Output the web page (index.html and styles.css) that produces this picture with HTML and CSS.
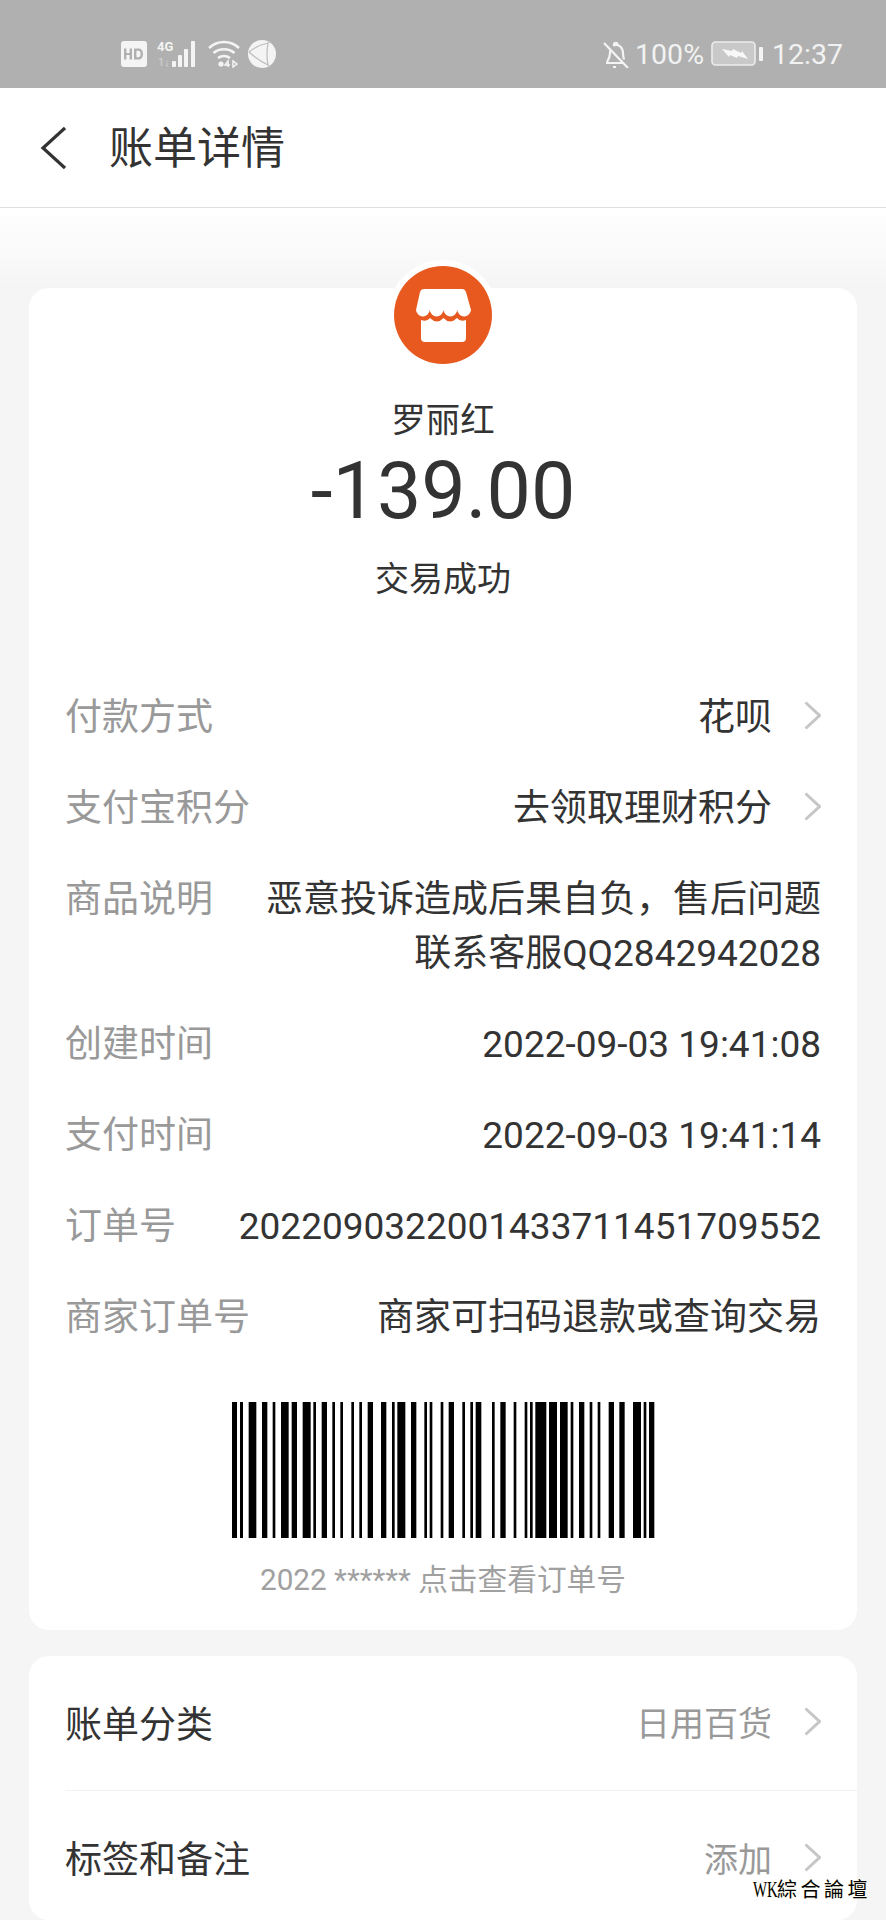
FILE: index.html
```html
<!DOCTYPE html>
<html>
<head>
  <title>账单详情</title>
  <link rel="stylesheet" href="styles.css">
</head>
<body>
  <div class="status-bar">
    <div class="status-left">
      <svg class="icon-hd" width="26" height="26" viewBox="0 0 26 26"><path fill="#f4f4f4" fill-rule="evenodd" d="M3 0h20a3 3 0 0 1 3 3v20a3 3 0 0 1-3 3H3a3 3 0 0 1-3-3V3a3 3 0 0 1 3-3zM3 7.500v11h2.400v-4.400h3.200v4.400H11v-11H8.600v4.400H5.400V7.500zM13 7.500v11h4.500c2.800 0 4.500-2 4.500-5.500s-1.700-5.500-4.500-5.500zm2.400 2.200h1.900c1.500 0 2.300 1.100 2.300 3.300s-.8 3.300-2.300 3.300h-1.900z"/></svg>
      <svg class="icon-signal" width="39" height="28" viewBox="0 0 39 28">
        <text x="0" y="11" class="net-label">4G</text>
        <text x="1" y="26" class="net-sub">1↓</text>
        <rect x="15" y="21" width="4" height="6" rx="1" fill="#f4f4f4"/>
        <rect x="21" y="15" width="4" height="12" rx="1" fill="#f4f4f4"/>
        <rect x="27" y="9" width="4" height="18" rx="1" fill="#f4f4f4"/>
        <rect x="34" y="1" width="4" height="26" rx="1" fill="#f4f4f4"/>
      </svg>
      <svg class="icon-wifi" width="32" height="28" viewBox="0 0 32 28" fill="none" stroke="#f4f4f4" stroke-width="2.600">
        <path d="M1 8c8.500-8 21.500-8 30 0"/>
        <path d="M5.500 13c6-5 15-5 21 0"/>
        <path d="M10 18c3.500-2.500 8.500-2.500 12 0"/>
        <circle cx="13" cy="24" r="2.600" fill="#f4f4f4" stroke="none"/>
        <path d="M20 27v-6l-3 4h5M25 27v-6l4 3z" stroke-width="1.500"/>
      </svg>
      <svg class="icon-globe" width="28" height="28" viewBox="0 0 28 28">
        <circle cx="14" cy="14" r="14" fill="#f4f4f4"/>
        <path d="M1 12Q10 5 20 3M1 12Q10 20 20 25M20 3Q18 14 20 25M20 3l3-2M20 25l2 2" fill="none" stroke="#bcbcbc" stroke-width="1.200"/>
      </svg>
    </div>
    <div class="status-right">
      <svg class="icon-bell" width="26" height="28" viewBox="0 0 26 28" fill="none" stroke="#f4f4f4" stroke-width="2.200">
        <path d="M3 23h17M4 22c2-3 3-5 3-9 0-1 .2-2 .6-3M10 5.500c6-2 10 2 10 8 0 2 .4 4 1 6"/>
        <path d="M11 5c0-3 3.500-3 3.500 0M1 3l24 25M10 27h3"/>
      </svg>
      <span class="status-text">100%</span>
      <svg class="icon-battery" width="52" height="26" viewBox="0 0 52 26">
        <rect x="1" y="1" width="43" height="23" rx="3.500" fill="#c9c9c9" stroke="#ececec" stroke-width="1.600"/>
        <path d="M11 8l10 2 1-2 8 4 1-2 6 8-10-3-1 2-7-3-1 2z" fill="#f8f8f8"/>
        <rect x="48" y="6" width="4" height="14" rx="1" fill="#f4f4f4"/>
      </svg>
      <span class="status-text time">12:37</span>
    </div>
  </div>

  <div class="nav-bar">
    <svg class="back-icon" width="26" height="44" viewBox="0 0 26 44" fill="none" stroke="#333" stroke-width="3.200"><path d="M25 2L3 22l22 20"/></svg>
    <h1>账单详情</h1>
  </div>

  <div class="content">
    <div class="card detail-card">
      <div class="summary">
        <div class="avatar">
          <svg width="98" height="98" viewBox="0 0 98 98">
            <circle cx="49" cy="49" r="49" fill="#e8591f"/>
            <path fill="#fff" d="M30 23H68Q71 23 72 26L77 44A6.900 7 0 0 1 63.250 44A6.900 7 0 0 1 49.500 44A6.900 7 0 0 1 35.750 44A6.900 7 0 0 1 22 44L26 26Q27 23 30 23Z"/>
            <path fill="#fff" d="M27 54Q33 56 36 52Q43 59 49.500 52Q56 59 63 52Q66 56 72 54V72a4 4 0 0 1-4 4H31a4 4 0 0 1-4-4Z"/>
          </svg>
        </div>
        <div class="name">罗丽红</div>
        <div class="amount">-139.00</div>
        <div class="state">交易成功</div>
      </div>

      <div class="row">
        <span class="label">付款方式</span>
        <span class="value">花呗</span>
        <svg class="chevron" width="17" height="29" viewBox="0 0 17 29" fill="none" stroke="#c6c6c6" stroke-width="3"><path d="M1.500 1.500l14 13-14 13"/></svg>
      </div>
      <div class="row">
        <span class="label">支付宝积分</span>
        <span class="value">去领取理财积分</span>
        <svg class="chevron" width="17" height="29" viewBox="0 0 17 29" fill="none" stroke="#c6c6c6" stroke-width="3"><path d="M1.500 1.500l14 13-14 13"/></svg>
      </div>
      <div class="row">
        <span class="label">商品说明</span>
        <span class="value">恶意投诉造成后果自负，售后问题<br>联系客服QQ2842942028</span>
      </div>
      <div class="row">
        <span class="label">创建时间</span>
        <span class="value">2022-09-03 19:41:08</span>
      </div>
      <div class="row">
        <span class="label">支付时间</span>
        <span class="value">2022-09-03 19:41:14</span>
      </div>
      <div class="row">
        <span class="label">订单号</span>
        <span class="value">2022090322001433711451709552</span>
      </div>
      <div class="row">
        <span class="label">商家订单号</span>
        <span class="value">商家可扫码退款或查询交易</span>
      </div>

      <div class="barcode">
        <svg width="423" height="136" viewBox="35 0 1269 136" preserveAspectRatio="none" fill="#000">
          <rect x="35" width="15" height="136"/><rect x="59" width="9" height="136"/><rect x="85" width="23" height="136"/><rect x="125" width="16" height="136"/><rect x="157" width="8" height="136"/><rect x="182" width="23" height="136"/><rect x="214" width="16" height="136"/><rect x="247" width="24" height="136"/><rect x="279" width="8" height="136"/><rect x="304" width="16" height="136"/><rect x="336" width="8" height="136"/><rect x="360" width="8" height="136"/><rect x="393" width="8" height="136"/><rect x="417" width="8" height="136"/><rect x="442" width="16" height="136"/><rect x="482" width="16" height="136"/><rect x="515" width="8" height="136"/><rect x="531" width="24" height="136"/><rect x="572" width="16" height="136"/><rect x="612" width="8" height="136"/><rect x="628" width="8" height="136"/><rect x="661" width="8" height="136"/><rect x="685" width="16" height="136"/><rect x="726" width="8" height="136"/><rect x="750" width="8" height="136"/><rect x="766" width="17" height="136"/><rect x="815" width="8" height="136"/><rect x="840" width="16" height="136"/><rect x="880" width="8" height="136"/><rect x="913" width="8" height="136"/><rect x="929" width="8" height="136"/><rect x="945" width="33" height="136"/><rect x="986" width="24" height="136"/><rect x="1019" width="23" height="136"/><rect x="1051" width="8" height="136"/><rect x="1076" width="16" height="136"/><rect x="1108" width="8" height="136"/><rect x="1132" width="8" height="136"/><rect x="1165" width="16" height="136"/><rect x="1197" width="16" height="136"/><rect x="1238" width="24" height="136"/><rect x="1270" width="8" height="136"/><rect x="1286" width="16" height="136"/>
        </svg>
        <div class="barcode-text">2022 ****** 点击查看订单号</div>
      </div>
    </div>

    <div class="card extra-card">
      <div class="extra-row">
        <span class="extra-label">账单分类</span>
        <span class="extra-value">日用百货</span>
        <svg class="chevron" width="17" height="29" viewBox="0 0 17 29" fill="none" stroke="#c6c6c6" stroke-width="3"><path d="M1.500 1.500l14 13-14 13"/></svg>
      </div>
      <div class="extra-row">
        <span class="extra-label">标签和备注</span>
        <span class="extra-value">添加</span>
        <svg class="chevron" width="17" height="29" viewBox="0 0 17 29" fill="none" stroke="#c6c6c6" stroke-width="3"><path d="M1.500 1.500l14 13-14 13"/></svg>
      </div>
    </div>
  </div>

  <div class="watermark"><span class="wm-latin">WK</span>綜合論壇</div>
</body>
</html>
```

FILE: styles.css
```css
html, body {
  height: 1920px;
  overflow: hidden;
}
body {
  font-family: Roboto, "Noto Sans CJK SC", sans-serif;
  margin: 0;
  padding: 0;
  background-color: #f5f5f5;
  color: #333;
}

/* status bar */
.status-bar {
  display: flex;
  justify-content: space-between;
  align-items: center;
  box-sizing: border-box;
  height: 88px;
  padding: 20px 43px 0 121px;
  background-color: #b0b0b0;
}
.status-left, .status-right {
  display: flex;
  align-items: center;
}
.icon-signal {
  margin-left: 10px;
}
.icon-wifi {
  margin-left: 12px;
}
.icon-globe {
  margin-left: 8px;
}
.net-label {
  font-family: "Roboto", sans-serif;
  font-size: 13px;
  font-weight: 700;
  fill: #f4f4f4;
}
.net-sub {
  font-family: "Roboto", sans-serif;
  font-size: 11px;
  fill: #d4d4d4;
}
.status-text {
  margin-left: 6px;
  font-size: 28.500px;
  color: #f2f2f2;
}
.icon-battery {
  margin-left: 7px;
}
.time {
  margin-left: 9px;
}

/* nav */
.nav-bar {
  display: flex;
  align-items: center;
  box-sizing: border-box;
  height: 120px;
  padding-left: 40px;
  background-color: #fff;
  border-bottom: 1px solid #dedede;
}
.nav-bar h1 {
  margin: 0 0 5px 43px;
  font-size: 44px;
  font-weight: 400;
  color: #333;
}

.content {
  height: 1712px;
  box-sizing: border-box;
  overflow: hidden;
  padding: 80px 29px 0;
  background: linear-gradient(#fff, #f5f5f5 80px);
}
.card {
  background-color: #fff;
  border-radius: 20px;
}

.detail-card {
  height: 1342px;
  box-sizing: border-box;
}
.summary {
  display: flex;
  flex-direction: column;
  align-items: center;
  height: 382px;
}
.avatar {
  width: 98px;
  height: 98px;
  margin-top: -28px;
  padding: 6px;
  border-radius: 50%;
  background-color: #fff;
}
.name {
  margin-top: 26px;
  font-size: 34.500px;
  line-height: 48px;
}
.amount {
  margin-top: -2px;
  font-size: 79px;
  line-height: 98px;
  font-weight: 400;
}
.state {
  margin-top: 15px;
  font-size: 34px;
  line-height: 48px;
}

.row {
  display: flex;
  align-items: flex-start;
  padding: 21px 36px 16px 36px;
  font-size: 37px;
  line-height: 54px;
}
.label {
  flex-shrink: 0;
  color: #999;
}
.value {
  flex: 1;
  text-align: right;
  color: #333;
}
.chevron {
  flex-shrink: 0;
  margin-left: 32px;
  align-self: center;
}
.row .chevron {
  margin-top: -5px;
}

.barcode {
  display: flex;
  flex-direction: column;
  align-items: center;
  margin-top: 41px;
}
.barcode svg {
  display: block;
}
.barcode-text {
  margin-top: 21px;
  font-size: 29.700px;
  line-height: 42px;
  color: #a0a0a0;
}

.extra-card {
  margin-top: 26px;
  padding-left: 36px;
  height: 264px;
  overflow: hidden;
}
.extra-row {
  display: flex;
  align-items: center;
  box-sizing: border-box;
  height: 135px;
  padding-right: 36px;
  padding-bottom: 3px;
  font-size: 37px;
  border-bottom: 1px solid #f2f2f2;
}
.extra-row:last-child {
  border-bottom: none;
}
.extra-label {
  color: #333;
}
.extra-value {
  flex: 1;
  text-align: right;
  font-size: 34px;
  color: #999;
}

.watermark {
  position: absolute;
  left: 753px;
  top: 1877px;
  font-family: "Liberation Serif", "Noto Sans CJK TC", serif;
  font-size: 20px;
  line-height: 24px;
  letter-spacing: 3.500px;
  color: #000;
  text-shadow: 0 0 2px #fffbd8;
  white-space: nowrap;
}
.wm-latin {
  display: inline-block;
  width: 24px;
  font-size: 24px;
  letter-spacing: 0;
  transform: scaleX(0.62);
  transform-origin: left center;
}
```
